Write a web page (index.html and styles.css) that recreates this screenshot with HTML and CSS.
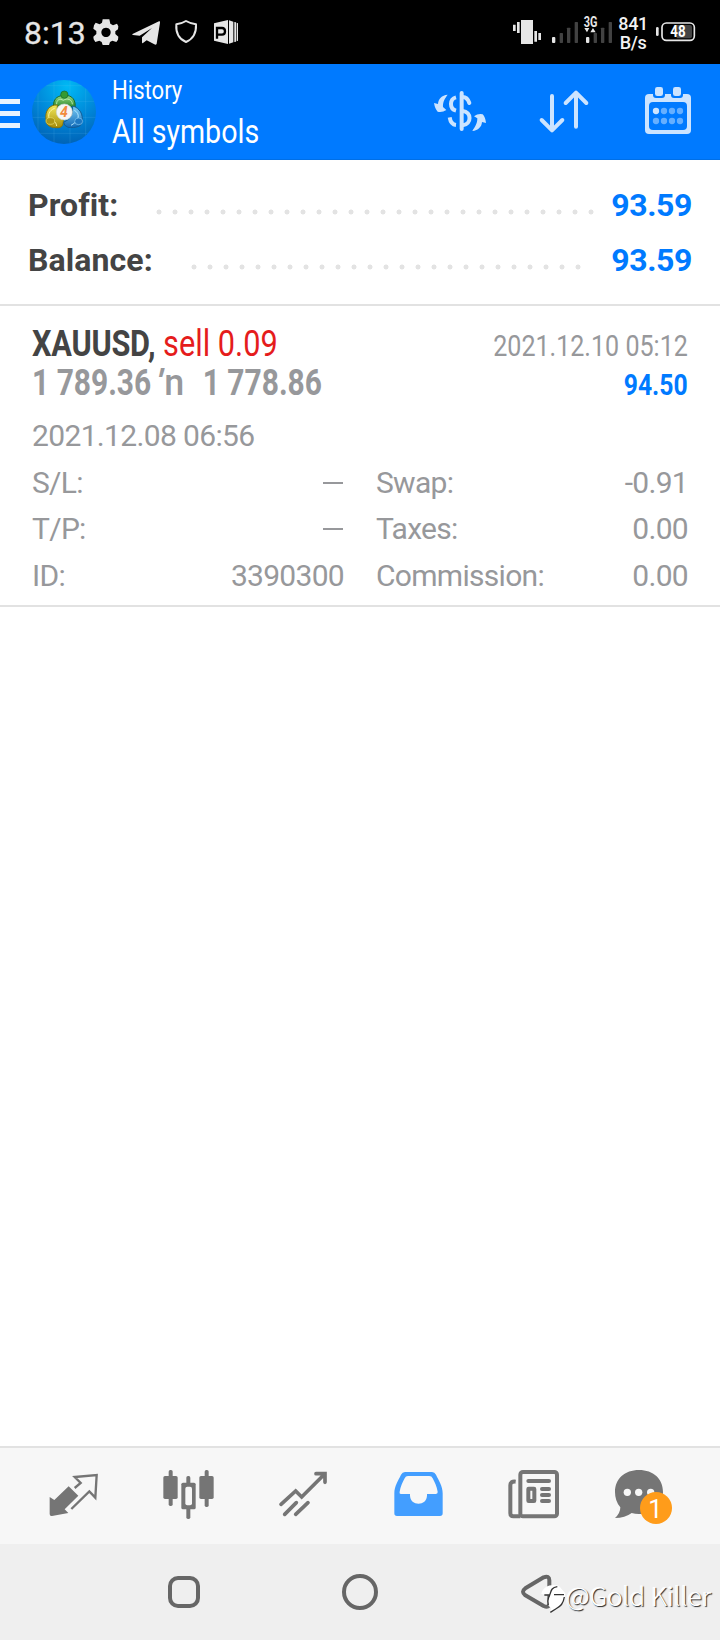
FILE: index.html
```html
<!DOCTYPE html>
<html lang="en">
<head>
<meta charset="utf-8">
<title>History</title>
<link rel="stylesheet" href="styles.css">
</head>
<body>
<div class="screen">
  <div class="status">
    <span class="clock">8:13</span>
    <svg class="status-left" viewBox="264 0 480 192" fill="#e6e6e6">
      <path fill-rule="evenodd" d="M308 58h20l3 13 8 5 12-5 4 8 -1 9-8 6v8l9 8-1 9-5 7-12-4-7 4-3 9h-19l-3-9-7-4-12 4-5-8-1-8 9-8v-9l-9-7 2-10 5-8 12 5 7-5zM318 83a14 14 0 1 0 .1 0z"/>
      <path d="M396 103 477 64Q481 63 480 68L470 131Q468 136 463 133L440 121 429 129Q426 131 426 126V112L456 84 419 107 399 105Z"/>
      <path fill="none" stroke="#e6e6e6" stroke-width="6" stroke-linejoin="round" d="M558 63 Q572 71 588 73 Q590 112 558 126 Q526 112 529 73 Q545 71 558 63Z"/>
      <path d="M642 70 684 60V132L642 122Z"/>
      <path fill="none" stroke="#000" stroke-width="7" d="M651 116V84H666Q675 84 675 94T666 104H651"/>
      <path d="M687 61 700 65V127L687 131ZM703 66 708 67V125L703 126ZM710 68 714 70V122L710 124Z"/>
    </svg>
    <svg class="status-right" viewBox="60 0 320 192" fill="#e6e6e6">
      <path d="M69 74h8v19h-8zM81 66h8v33h-8zM93 60h36v72H93zM133 93h8v32h-8zM145 99h8v21h-8z"/>
      <rect x="186" y="111" width="10" height="18" rx="3"/>
      <g fill="#424242"><rect x="209" y="99" width="10" height="30" rx="2"/><rect x="231" y="83" width="10" height="46" rx="2"/><rect x="254" y="66" width="10" height="63" rx="2"/><rect x="311" y="99" width="10" height="30" rx="2"/><rect x="333" y="83" width="10" height="46" rx="2"/><rect x="356" y="66" width="10" height="63" rx="2"/></g>
      <rect x="288" y="111" width="10" height="18" rx="3"/>
      <path d="M283 84h15l-7 13zM301 97h16l-8-13z"/>
      <text class="net" x="281" y="81" textLength="41" lengthAdjust="spacingAndGlyphs">3G</text>
    </svg>
    <div class="speed"><span>841</span><span>B/s</span></div>
    <svg class="battery" viewBox="492 0 126 192">
      <rect x="498" y="81" width="8" height="27" rx="4" fill="#e6e6e6"/>
      <rect x="516" y="69" width="97" height="52" rx="13" fill="none" stroke="#e6e6e6" stroke-width="5"/>
      <path d="M560 75h40q6 0 6 6v28q0 6-6 6h-40z" fill="#444"/>
      <text class="charge" x="541" y="111" textLength="46" lengthAdjust="spacingAndGlyphs">48</text>
    </svg>
  </div>

  <header class="appbar">
    <div class="menu"><i></i><i></i><i></i></div>
    <svg class="logo" viewBox="96 240 192 192">
      <defs>
        <radialGradient id="sky" cx=".55" cy=".1" r=".95"><stop offset="0" stop-color="#00b9f4"/><stop offset=".55" stop-color="#0086d8"/><stop offset="1" stop-color="#005fb2"/></radialGradient>
        <linearGradient id="green" x2="0" y2="1"><stop stop-color="#9adb82"/><stop offset="1" stop-color="#1c7f25"/></linearGradient>
        <linearGradient id="yellow" x2="0" y2="1"><stop stop-color="#f3ea5c"/><stop offset="1" stop-color="#a58b08"/></linearGradient>
        <linearGradient id="blue" x2="0" y2="1"><stop stop-color="#7acdf7"/><stop offset="1" stop-color="#1269b6"/></linearGradient>
        <clipPath id="disc"><circle cx="192" cy="336" r="96"/></clipPath>
      </defs>
      <circle cx="192" cy="336" r="96" fill="url(#sky)"/>
      <path clip-path="url(#disc)" d="M114 240V432M162 240V432M210 240V432M257 240V432M96 257H288M96 304H288M96 352H288M96 400H288" stroke="#69c4f2" stroke-opacity=".25" stroke-width="2"/>
      <path d="M162 325C157 302 167 287 193 286S228 302 225 325Q194 306 162 325Z" fill="url(#green)" stroke="#176b28" stroke-width="3"/>
      <path d="M170 313C169 300 179 294 190 301C201 293 217 298 217 313" fill="none" stroke="#b6edb0" stroke-width="3"/>
      <circle cx="193" cy="284" r="11" fill="#359a31" stroke="#156629" stroke-width="2"/>
      <path d="M172 315C149 313 134 333 138 358C137 378 153 384 175 383C189 382 190 370 190 360Q168 344 172 315Z" fill="url(#yellow)" stroke="#897509" stroke-width="3"/>
      <path d="M164 325C146 331 143 347 149 360C160 360 169 367 170 378" fill="none" stroke="#fff8a0" stroke-width="3"/>
      <ellipse cx="151" cy="363" rx="13" ry="10" fill="#ad9715" stroke="#e9dc6d" stroke-width="2"/>
      <path d="M218 318C240 324 250 344 246 364C248 379 226 385 204 382Q191 377 191 367Q221 354 218 318Z" fill="url(#blue)" stroke="#145c96" stroke-width="3"/>
      <path d="M223 331C241 340 239 362 213 376" fill="none" stroke="#b2e6ff" stroke-width="3"/>
      <ellipse cx="236" cy="364" rx="12" ry="10" fill="#1d77c2" stroke="#84c9f3" stroke-width="2"/>
      <circle cx="193" cy="336" r="24" fill="#f5f5f5" stroke="#c8d4cf" stroke-width="2"/>
      <text class="four" x="192" y="351">4</text>
    </svg>
    <div class="titles"><span class="subtitle">History</span><span class="title">All symbols</span></div>
    <svg class="exchange" viewBox="30 12 180 288" fill="#cce4ff">
      <path d="M83 104C65 106 55 116 54 132L42 129Q45 147 53 155Q67 158 79 150L69 141C68 125 75 115 83 104ZM157 213C175 211 185 201 186 186L198 189Q196 171 188 163Q174 160 162 169L172 175C172 192 165 200 157 213Z"/>
      <g fill="none" stroke="#cce4ff" stroke-width="12"><path stroke-linecap="round" d="M125 99V207"/><path d="M108 112C88 117 88 147 108 152M108 195C97 194 91 184 89 172"/><path stroke-linecap="round" d="M128 111Q142 111 148 129"/><path d="M128 153C155 155 156 193 128 196"/></g>
    </svg>
    <svg class="sort" viewBox="342 12 180 288"><path fill="none" stroke="#cce4ff" stroke-width="12" stroke-linecap="round" stroke-linejoin="round" d="M396 108V210M365 180 396 211 427 180M468 98V200M437 129 468 98 499 129"/></svg>
    <svg class="calendar" viewBox="444 192 180 288">
      <rect x="465" y="282" width="138" height="120" rx="12" fill="#cce4ff"/>
      <rect x="477" y="306" width="114" height="84" rx="12" fill="#007aff"/>
      <path d="M489 279h36v6q0 9-9 9h-18q-9 0-9-9zM543 279h36v6q0 9-9 9h-18q-9 0-9-9z" fill="#007aff"/>
      <g fill="#cce4ff"><rect x="495" y="261" width="24" height="27" rx="7"/><rect x="549" y="261" width="24" height="27" rx="7"/></g>
      <g fill="#66afff"><circle cx="498" cy="333" r="9.5" fill="#cce4ff"/><circle cx="522" cy="333" r="9.5"/><circle cx="546" cy="333" r="9.5"/><circle cx="570" cy="333" r="9.5"/><circle cx="498" cy="363" r="9.5"/><circle cx="522" cy="363" r="9.5"/><circle cx="546" cy="363" r="9.5"/><circle cx="570" cy="363" r="9.5"/></g>
    </svg>
  </header>

  <main class="content">
    <section class="summary">
      <div class="sum-row profit"><b>Profit:</b><span class="leader"></span><strong>93.59</strong></div>
      <div class="sum-row balance"><b>Balance:</b><span class="leader"></span><strong>93.59</strong></div>
    </section>
    <section class="deal">
      <div class="deal-row">
        <div class="symbol"><b>XAUUSD,</b> <span>sell 0.09</span></div>
        <div class="close-time">2021.12.10 05:12</div>
      </div>
      <div class="deal-row second">
        <div class="prices"><b class="open-price">1 789.36</b><span class="arrow"><span class="prime">′</span><span class="shaft">n</span></span><b class="close-price">1 778.86</b></div>
        <div class="gain">94.50</div>
      </div>
      <div class="open-time">2021.12.08 06:56</div>
      <div class="details">
        <div class="cell"><span>S/L:</span><i class="dash"></i></div>
        <div class="cell"><span>Swap:</span><span>-0.91</span></div>
        <div class="cell"><span>T/P:</span><i class="dash"></i></div>
        <div class="cell"><span>Taxes:</span><span>0.00</span></div>
        <div class="cell"><span>ID:</span><span>3390300</span></div>
        <div class="cell"><span>Commission:</span><span>0.00</span></div>
      </div>
    </section>
  </main>

  <nav class="tabs">
    <svg viewBox="48 54 345 288"><path fill="#757575" d="M149 201 163 210 206 169 235 197 194 238 205 249 156 258Q149 259 149 252Z"/><path fill="none" stroke="#757575" stroke-width="7" d="M224 174 242 159 224 141 290 135 286 203 268 184 214 237"/></svg>
    <svg viewBox="393 54 345 288"><g fill="#757575"><rect x="506" y="120" width="12" height="108" rx="5"/><rect x="490" y="138" width="43" height="69" rx="5"/><rect x="559" y="138" width="12" height="129" rx="5"/><rect x="544" y="158" width="43" height="80" rx="5"/><rect x="614" y="120" width="12" height="111" rx="5"/><rect x="598" y="138" width="43" height="69" rx="5"/></g><rect x="556" y="170" width="20" height="56" rx="6" fill="#f7f7f7"/></svg>
    <svg viewBox="18 54 345 288"><path fill="none" stroke="#757575" stroke-width="11" stroke-linecap="round" d="M123 223 167 183 185 201 254 132M134 253 169 218M167 253 204 218M228 131H255V157"/></svg>
    <svg viewBox="363 54 345 288"><path fill="#439eff" d="M463 190C463 168 475 151 483 134Q487 126 495 126H576Q584 126 588 134C596 151 608 168 608 190V250Q608 258 600 258H471Q463 258 463 250Z"/><path fill="#f7f7f7" d="M482 192Q477 191 479 185C481 170 488 157 494 145Q497 138 504 138H568Q575 138 578 145C584 157 590 168 593 185Q594 191 588 192H561V196C561 230 510 230 510 196V192Z"/></svg>
    <svg viewBox="-12 54 345 288"><g fill="none" stroke="#757575" stroke-width="12" stroke-linecap="round"><rect x="121" y="126" width="110" height="133" rx="8"/><path stroke-linecap="butt" d="M107 155Q91 153 91 166V250Q91 259 100 259H121"/><path d="M145 153H207M186 177H207M186 195H207M186 213H207"/><rect x="145" y="176" width="18" height="37" rx="1"/></g></svg>
    <svg viewBox="333 54 345 288"><path fill="#757575" d="M477 120C520 120 549 146 549 186C549 228 519 252 477 252Q465 252 455 249Q435 264 405 264Q421 250 421 232Q405 214 405 186C405 146 434 120 477 120Z"/><g fill="#f7f7f7"><circle cx="442" cy="187" r="11"/><circle cx="476" cy="187" r="11"/><circle cx="512" cy="187" r="11"/></g><circle cx="528" cy="234" r="48" fill="#ff9c1a"/><text class="badge" x="526" y="264">1</text></svg>
  </nav>

  <footer class="sysnav">
    <svg viewBox="288 342 528 288"><rect x="510" y="444" width="84" height="84" rx="24" fill="none" stroke="#666" stroke-width="12"/></svg>
    <svg viewBox="96 342 528 288"><circle cx="360" cy="486" r="48" fill="none" stroke="#666" stroke-width="12"/></svg>
    <svg viewBox="-96 342 528 288"><path fill="none" stroke="#666" stroke-width="12" stroke-linejoin="round" d="M191 442 136 475Q122 485 136 496L191 528Q208 535 208 520V451Q208 436 191 442Z"/></svg>
    <div class="watermark">
      <svg viewBox="180 456 84 96"><path fill="#fff" d="M184 492C188 472 205 464 224 465Q238 466 244 476L256 490C254 512 246 522 227 536L210 547 214 534C202 527 198 514 209 497Z"/><path fill="none" stroke="#333" stroke-width="4" d="M232 470C209 474 215 486 206 502Q201 515 205 526M193 495H208M222 494H252M253 501C250 521 242 529 227 537L211 547"/></svg>
      <span>@Gold Killer</span>
    </div>
  </footer>
</div>
</body>
</html>
```
FILE: styles.css
```css
* { box-sizing: border-box; }
body { margin: 0; background: #fff; font-family: Roboto, "Liberation Sans", sans-serif; }
svg { display: block; flex: none; }
.screen { width: 720px; height: 1640px; display: flex; flex-direction: column; overflow: hidden; }

.status { height: 64px; background: #000; color: #e6e6e6; display: flex; align-items: center; padding-left: 24px; }
.clock { width: 64px; font-size: 32px; font-weight: 400; line-height: 64px; padding-top: 1px; -webkit-text-stroke: .3px #e6e6e6; white-space: nowrap; }
.status-left { width: 160px; height: 64px; }
.status-right { width: 106.67px; height: 64px; margin-left: 262px; }
.net { font: bold 42px Roboto, sans-serif; }
.speed { width: 37px; margin-left: -2px; display: flex; flex-direction: column; align-items: center; font-size: 18px; font-weight: 500; line-height: 19px; letter-spacing: -.3px; color: #f2f2f2; padding-top: 2px; }
.battery { width: 42px; height: 64px; margin-left: 2px; }
.charge { font: bold 47px Roboto, sans-serif; fill: #fff; }

.appbar { height: 96px; background: #007aff; border-bottom: 1px solid #006fe6; display: flex; align-items: flex-start; color: #fff; }
.menu { width: 32px; padding-top: 35px; display: flex; flex-direction: column; gap: 7px; }
.menu i { width: 20px; height: 5px; background: #e8f3ff; }
.logo { width: 64px; height: 64px; margin-top: 16px; }
.four { font: italic bold 42px Roboto, sans-serif; fill: #f18a3d; text-anchor: middle; }
.titles { width: 334px; padding: 8px 0 0 16px; display: flex; flex-direction: column; }
.titles span { white-space: nowrap; transform: scaleX(.842); transform-origin: 0 0; }
.titles .subtitle { font-size: 26px; line-height: 36px; transform: scaleX(.85); }
.title { font-size: 34px; line-height: 46px; }
.exchange { width: 60px; height: 96px; }
.sort { width: 60px; height: 96px; margin-left: 44px; }
.calendar { width: 60px; height: 96px; margin-left: 44px; }

.content { flex: 1; }
.summary { height: 146px; border-bottom: 2px solid #e2e2e2; padding: 17px 28px 0; }
.sum-row { display: flex; align-items: center; height: 55px; font-size: 32px; line-height: 54px; color: #444; }
.sum-row b { width: 123px; letter-spacing: .1px; }
.sum-row strong { color: #007aff; margin-left: auto; letter-spacing: -.4px; }
.leader { width: 448px; height: 6px; margin-top: 15px; background: radial-gradient(circle at 8px 3px, #e3e3e3 2.2px, transparent 2.8px) 0 0 / 16px 6px repeat-x; }
.balance b { width: 158.3px; }
.balance .leader { width: 400px; }

.deal { height: 301px; border-bottom: 2px solid #e2e2e2; padding: 18px 32px 0; color: #97989b; }
.deal-row { display: flex; justify-content: space-between; height: 39px; line-height: 40px; white-space: nowrap; }
.symbol { font-size: 36px; transform: scaleX(.854); transform-origin: 0 0; }
.symbol b { color: #444; letter-spacing: -.3px; }
.symbol span { color: #e51c1c; }
.close-time { font-size: 30px; line-height: 43px; transform: scaleX(.836); transform-origin: 100% 0; }
.prices { font-size: 36px; line-height: 41px; transform: scaleX(.832); transform-origin: 0 0; display: flex; }
.open-price { width: 149px; }
.arrow { width: 56.2px; display: flex; font-weight: 500; }
.prime { width: 10px; transform: skewX(-15deg) scaleX(1.4); transform-origin: 0 50%; }
.shaft { transform: scaleX(1.2); transform-origin: 0 0; }
.gain { font-size: 30px; font-weight: bold; color: #007aff; line-height: 43px; transform: scaleX(.823); transform-origin: 100% 0; }
.open-time { margin-top: 10px; font-size: 30px; line-height: 48px; letter-spacing: -.65px; }
.details { display: grid; grid-template-columns: 312px 312px; column-gap: 32px; grid-template-rows: 46px 46px 47px; font-size: 30px; line-height: 46px; letter-spacing: -.7px; }
.cell { display: flex; justify-content: space-between; align-items: center; }
.dash { width: 20px; height: 2px; background: #97989b; margin-right: 1px; }

.tabs { height: 98px; border-top: 2px solid #e2e2e2; background: #f7f7f7; display: flex; padding-left: 16px; }
.tabs svg { width: 115px; height: 96px; }
.badge { font: 76px Roboto, sans-serif; fill: #fff; text-anchor: middle; }
.sysnav { height: 96px; background: #efefef; display: flex; padding-left: 96px; position: relative; }
.sysnav > svg { width: 176px; height: 96px; }
.watermark { position: absolute; left: 540px; top: 38px; display: flex; align-items: flex-start; color: #fff; }
.watermark svg { width: 28px; height: 32px; }
.watermark span { margin: -3px 0 0 -2px; font: 300 26px/32px "Noto Sans CJK SC", "Noto Sans", sans-serif; white-space: nowrap; text-shadow: 1px 1px 1px #222, -1px 0 0 #fff; }
```
